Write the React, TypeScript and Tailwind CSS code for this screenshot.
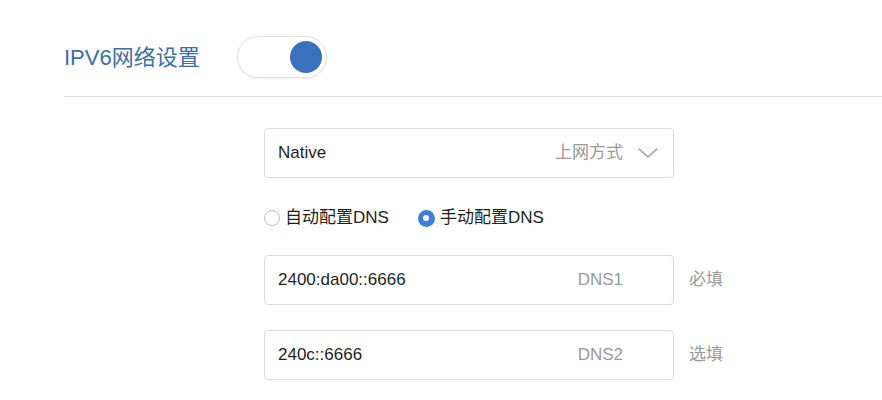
import React from "react";

const font = { fontFamily: '"Liberation Sans", "Noto Sans CJK SC", sans-serif' };

function Field({ value, label, hint }: { value: string; label: string; hint: string }) {
  return (
    <div className="flex items-center">
      <div className="flex h-[50px] w-[410px] items-center rounded-[4px] border border-[#dcdcdc] bg-white pl-[13px]">
        <span className="flex-1 text-[17px] text-[#1f1f1f]">{value}</span>
        <span className="text-[17px] text-[#9a9a9a]">{label}</span>
        <span className="w-[50px]" />
      </div>
      <span className="ml-[15px] text-[17px] text-[#9a9a9a]">{hint}</span>
    </div>
  );
}

export default function App() {
  return (
    <div className="h-[400px] w-[882px] overflow-hidden bg-white" style={font}>
      {/* header */}
      <div className="ml-[64px] border-b border-[#dedede] pb-[18px] pt-[36px]">
        <div className="flex items-center">
          <h1 className="text-[22px] font-normal text-[#3c6ea8]">IPV6网络设置</h1>
          <div className="ml-[37px] flex h-[42px] w-[90px] items-center justify-end rounded-full border border-[#e2e2e2] bg-white pr-[4px] shadow-[0_1px_2px_rgba(0,0,0,0.06)]">
            <div className="h-[32px] w-[32px] rounded-full bg-[#3a71bd]" />
          </div>
        </div>
      </div>

      {/* form */}
      <div className="ml-[264px] mt-[31px] flex flex-col">
        <div className="flex h-[50px] w-[410px] items-center rounded-[4px] border border-[#dcdcdc] bg-white pl-[13px]">
          <span className="flex-1 text-[17px] text-[#1f1f1f]">Native</span>
          <span className="text-[17px] text-[#9a9a9a]">上网方式</span>
          <span className="flex w-[50px] justify-center">
            <svg width="22" height="12" viewBox="0 0 22 12" fill="none">
              <path d="M2 2l9 8 9-8" stroke="#a0a0a0" strokeWidth="1.6" strokeLinecap="round" strokeLinejoin="round" />
            </svg>
          </span>
        </div>

        <div className="mt-[28px] flex h-[24px] items-center text-[17px] text-[#1f1f1f]">
          <label className="flex items-center">
            <span className="h-[16px] w-[16px] rounded-full border border-[#bdbdbd] bg-white" />
            <span className="ml-[5px]">自动配置DNS</span>
          </label>
          <label className="ml-[29px] flex items-center">
            <span className="flex h-[17px] w-[17px] items-center justify-center rounded-full bg-[#3d7fdb]">
              <span className="h-[6px] w-[6px] rounded-full bg-white" />
            </span>
            <span className="ml-[5px]">手动配置DNS</span>
          </label>
        </div>

        <div className="mt-[25px]">
          <Field value="2400:da00::6666" label="DNS1" hint="必填" />
        </div>
        <div className="mt-[25px]">
          <Field value="240c::6666" label="DNS2" hint="选填" />
        </div>
      </div>
    </div>
  );
}
